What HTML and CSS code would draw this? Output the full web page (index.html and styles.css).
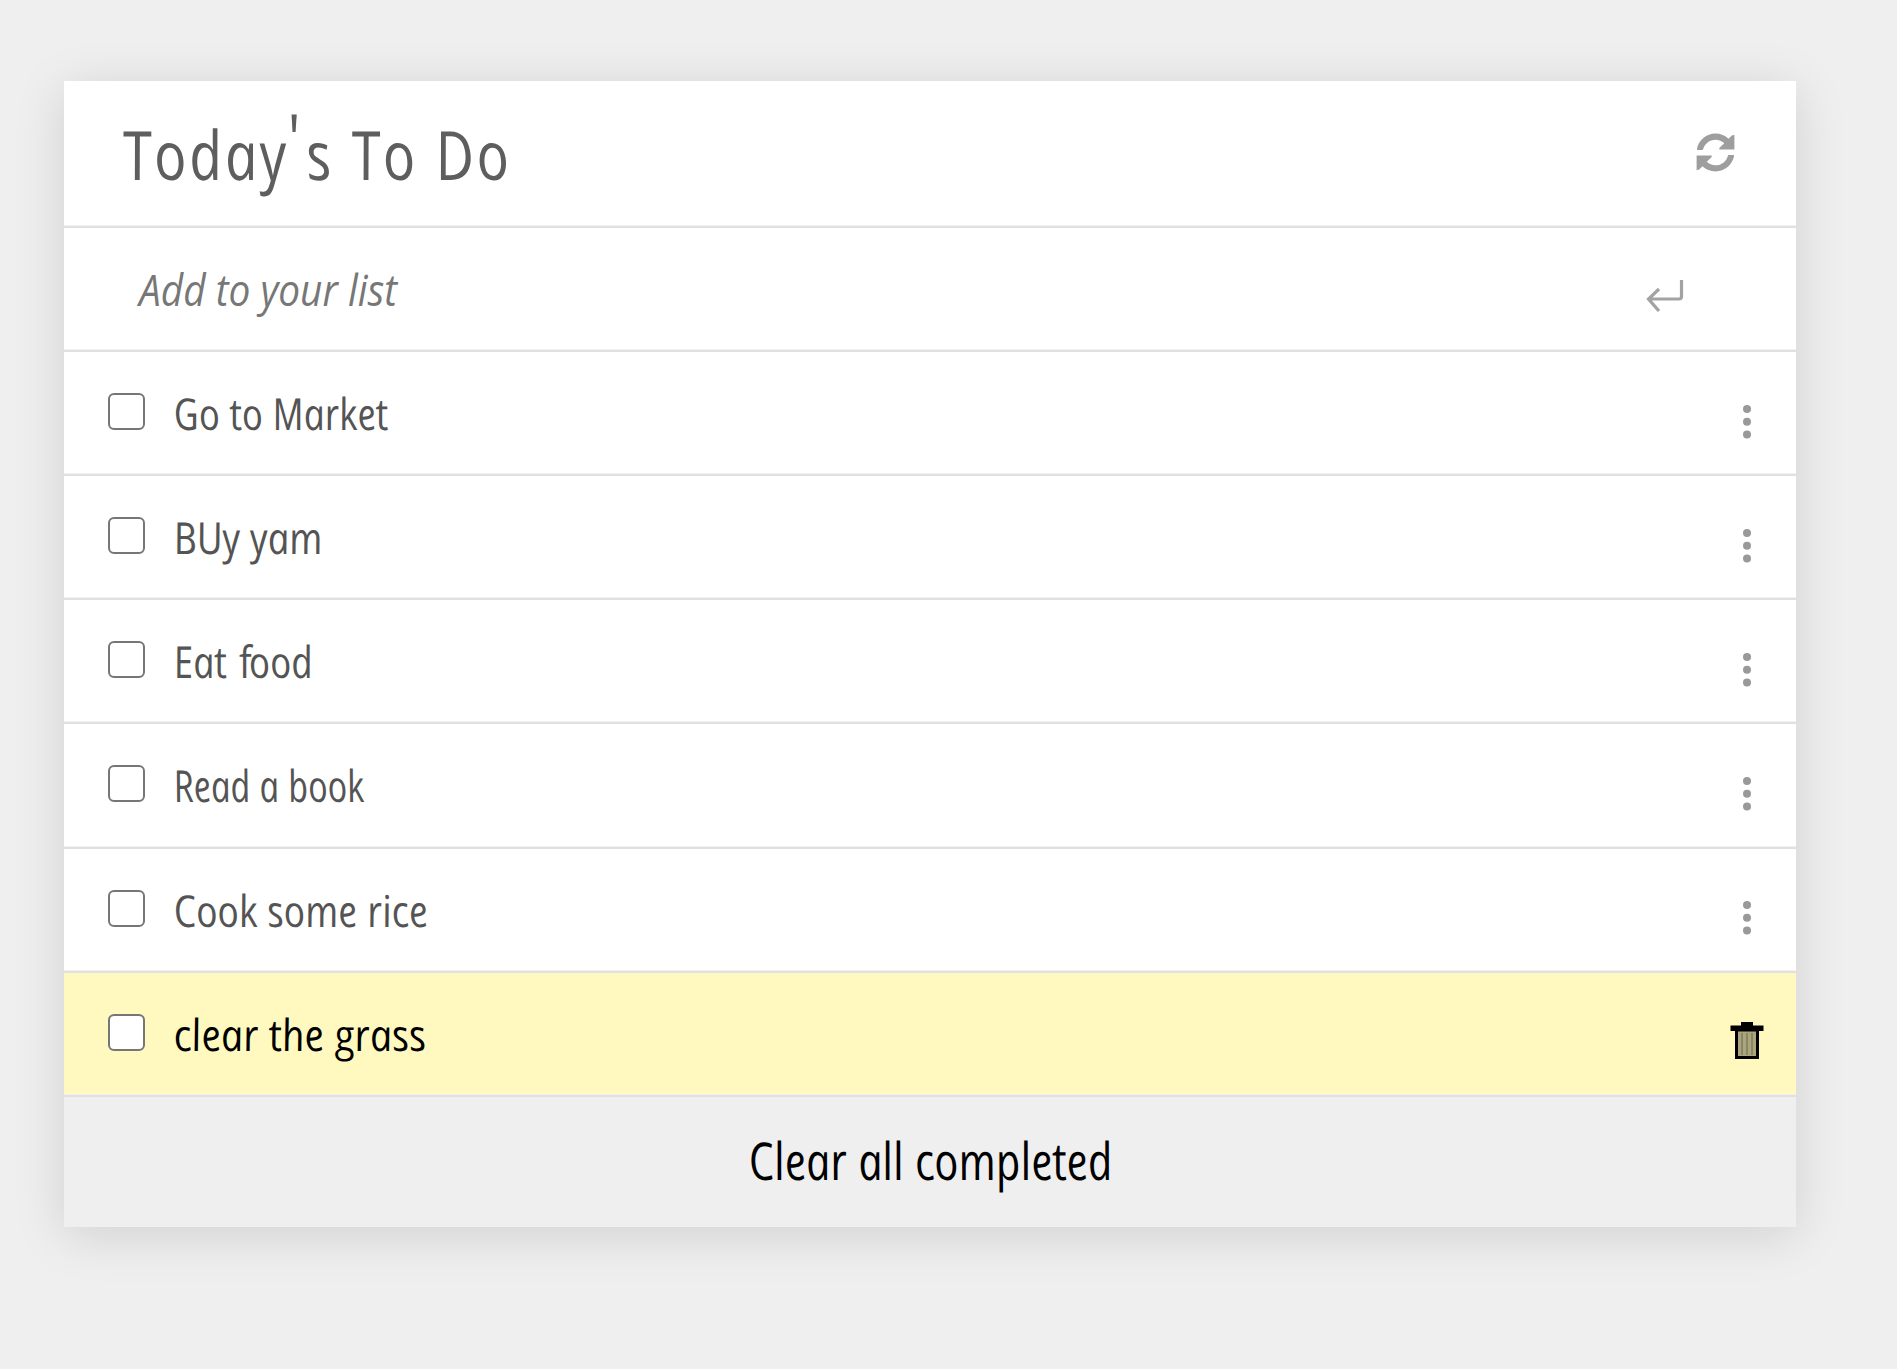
FILE: index.html
```html
<!DOCTYPE html>
<html lang="en">
<head>
<meta charset="utf-8">
<title>Today's To Do</title>
<link rel="stylesheet" href="styles.css">
</head>
<body>
<main class="card">
  <header class="header">
    <h1 class="hand title">Today<span class="apostrophe">'</span>s To Do</h1>
    <svg class="refresh" viewBox="0 0 512 512"><path d="M370.700 133.300C339.500 104 298.900 88 255.800 88c-77.500.1-144.300 53.200-162.800 126.900-1.300 5.400-6.100 9.200-11.700 9.200H24.100c-7.500 0-13.200-6.800-11.800-14.200C33.900 94.900 134.800 8 256 8c66.400 0 126.800 26.100 171.300 68.700L470 34L504 24V216H306V198L370.700 133.300zM8 296H206V314L141.200 378.800c31.300 29.300 71.800 45.300 114.900 45.200 77.400-.1 144.300-53.100 162.800-126.800 1.300-5.400 6.100-9.200 11.700-9.200h57.300c7.500 0 13.200 6.800 11.800 14.200C478.100 417.100 377.200 504 256 504c-66.400 0-126.800-26.100-171.300-68.700L42 478L8 488z"/></svg>
  </header>
  <div class="add">
    <span class="placeholder">Add to your list</span>
    <svg class="enter" viewBox="0 0 38 32"><path d="M35.500 0V16.500Q35.500 19 33 19H2M13 9L2.500 19L13 31"/></svg>
  </div>
  <ul class="list">
    <li class="item"><input type="checkbox" class="check"><span class="hand market">Go to Market</span><svg class="dots" viewBox="0 0 12 36"><circle cx="6" cy="5" r="4"/><circle cx="6" cy="17.700" r="4"/><circle cx="6" cy="30.500" r="4"/></svg></li>
    <li class="item"><input type="checkbox" class="check"><span class="hand yam">BUy yam</span><svg class="dots" viewBox="0 0 12 36"><circle cx="6" cy="5" r="4"/><circle cx="6" cy="17.700" r="4"/><circle cx="6" cy="30.500" r="4"/></svg></li>
    <li class="item"><input type="checkbox" class="check"><span class="hand food">Eat <span class="roman">f</span>ood</span><svg class="dots" viewBox="0 0 12 36"><circle cx="6" cy="5" r="4"/><circle cx="6" cy="17.700" r="4"/><circle cx="6" cy="30.500" r="4"/></svg></li>
    <li class="item"><input type="checkbox" class="check"><span class="hand book">Read a book</span><svg class="dots" viewBox="0 0 12 36"><circle cx="6" cy="5" r="4"/><circle cx="6" cy="17.700" r="4"/><circle cx="6" cy="30.500" r="4"/></svg></li>
    <li class="item"><input type="checkbox" class="check"><span class="hand rice">Cook some rice</span><svg class="dots" viewBox="0 0 12 36"><circle cx="6" cy="5" r="4"/><circle cx="6" cy="17.700" r="4"/><circle cx="6" cy="30.500" r="4"/></svg></li>
    <li class="item selected"><input type="checkbox" class="check"><span class="hand grass">clear the grass</span><svg class="trash" viewBox="0 0 34 38"><path class="bin" d="M6.500 8H27.500V35.500H6.500Z"/><path class="ribs" d="M12 11V33M17 11V33M22 11V33"/><path class="lid" d="M0.500 3.500H11V0H23V3.500H33.500V9H0.500Z"/></svg></li>
  </ul>
  <button class="clear"><span class="hand clear-text">Clear all completed</span></button>
</main>
</body>
</html>
```
FILE: styles.css
```css
* { box-sizing: border-box; }

body {
  margin: 0;
  padding: 81px 101px 142px 64px;
  background: #efefef;
  color: #545454;
  font-family: "Open Sans", "Noto Sans", sans-serif;
}

.card {
  background: #fff;
  box-shadow: 0 8px 48px rgba(0, 0, 0, 0.13);
}

/* italic letterforms sheared upright give a single-storey, handwritten look */
.hand {
  display: inline-block;
  font-style: italic;
  line-height: 1.362;
  white-space: nowrap;
  transform-origin: 0 78.500%;
  transform: skewX(10deg) scaleX(var(--sx, 0.85));
}

.roman {
  display: inline-block;
  font-style: normal;
  transform-origin: 0 78.500%;
  transform: skewX(-11.700deg);
}

.header, .add, .item {
  display: flex;
  align-items: center;
  border-bottom: 2px solid #e0e0e0;
  box-shadow: inset 0 -1px #f1f1f1;
}

.header {
  height: 147px;
  padding: 2px 60px 0 62px;
  justify-content: space-between;
}

.title {
  --sx: 0.848;
  margin: 0;
  font-size: 68px;
  font-weight: 400;
  letter-spacing: 3px;
  color: #5e5e5e;
}

.apostrophe {
  display: inline-block;
  margin: 0 0 0 3px;
  transform: translateY(-17px);
}

.refresh {
  width: 41px;
  height: 39px;
  margin-bottom: 4px;
  fill: #9e9e9e;
}

.add {
  height: 124px;
  padding: 0 112px 1px 75px;
  justify-content: space-between;
}

.placeholder {
  font-size: 44px;
  font-style: italic;
  white-space: nowrap;
  color: #777;
  transform-origin: 0 50%;
  transform: scaleX(0.882);
}

.enter {
  width: 38px;
  height: 32px;
  margin-top: 15px;
  fill: none;
  stroke: #a3a3a3;
  stroke-width: 3.200;
}

.list { list-style: none; margin: 0; padding: 0; }

.item {
  height: 124.140px;
  padding: 0 43px 1px 44px;
  font-size: 44px;
}

.item .hand { margin-top: 3px; }
.market { --sx: 0.845; }
.yam { --sx: 0.868; }
.food { --sx: 0.852; }
.book { --sx: 0.788; }
.rice { --sx: 0.864; }
.grass { --sx: 0.892; }

.check {
  appearance: none;
  flex: none;
  width: 37px;
  height: 37px;
  margin: 0 31px 2px 0;
  border: 2px solid #767676;
  border-radius: 6px;
  background: #fff;
}

.dots {
  width: 12px;
  height: 36px;
  margin: 18px 0 0 auto;
  fill: #999;
}

.selected { background: #fff9c0; color: #000; padding-right: 32px; }

.trash {
  width: 34px;
  height: 38px;
  margin: 16px 0 0 auto;
}

.bin { fill: #aaa57d; stroke: #000; stroke-width: 3; }
.ribs { fill: none; stroke: #8a8665; stroke-width: 2; }
.lid { fill: #000; }

.clear {
  display: flex;
  align-items: center;
  justify-content: center;
  width: 100%;
  height: 130px;
  padding: 0 0 2px 6px;
  border: 0;
  background: #efefef;
  color: #000;
  font: 500 52px "Open Sans", "Noto Sans", sans-serif;
}

.clear-text { --sx: 0.822; transform-origin: 50% 78.500%; }
```
